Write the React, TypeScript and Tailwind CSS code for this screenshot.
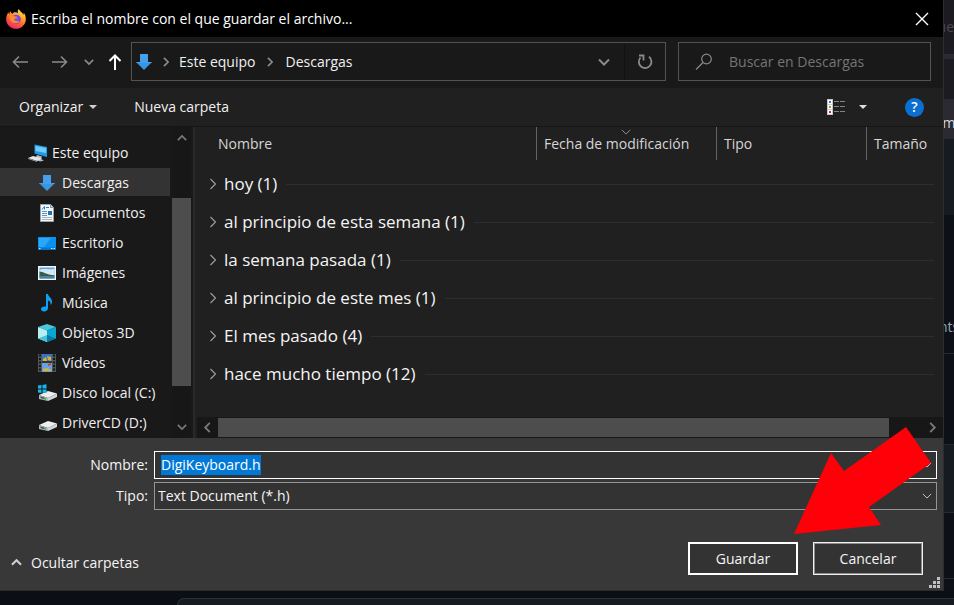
import React, { useEffect, useRef } from "react";

type IconProps = { className?: string };

function FirefoxIcon() {
  return (
    <svg viewBox="0 0 20 20" className="h-5 w-5 shrink-0" aria-hidden="true">
      <defs>
        <linearGradient id="fxBody" x1="0.8" y1="0" x2="0.25" y2="1">
          <stop offset="0" stopColor="#fff44f" />
          <stop offset="0.35" stopColor="#ffa12b" />
          <stop offset="0.65" stopColor="#ff5a36" />
          <stop offset="1" stopColor="#f0207c" />
        </linearGradient>
        <radialGradient id="fxGlobe" cx="0.5" cy="0.4" r="0.6">
          <stop offset="0" stopColor="#9059ff" />
          <stop offset="1" stopColor="#5b3fc4" />
        </radialGradient>
      </defs>
      <path
        d="M12.800 0c-1.200 1.300-1.300 2.800-.6 4.200-1-.7-2.100-1-3.200-.9C8 3.300 7.300 3.800 6.600 4.700 5.600 4.500 5 3.800 4.700 2.300 3.900 3 3.500 3.900 3.300 4.900 2.800 4.800 2.500 4.200 2.400 3.300 1 5.300.2 7.600.2 10.200c0 5.300 4.400 9.600 9.800 9.600s9.800-4.300 9.800-9.600c0-2.800-.9-5-2.300-6.600.2.800.3 1.600.1 2.300C16.500 3.300 13.600 2.500 12.800 0z"
        fill="url(#fxBody)"
      />
      <circle cx="10.200" cy="10.300" r="4.500" fill="url(#fxGlobe)" />
      <path d="M3.500 7.500c1.500-1.400 3.500-1 4.700-.2 1 .1 2.200.1 2.800.6-.3 1.100-2 1.200-2.500 1.800-.2 1 .2 2 1.500 2.400 1.200.4 2.300-.5 3.500-.2-.7 1.700-2.600 2.700-4.500 2.400C6.200 14 3.500 11.500 3.500 7.500z" fill="#ff8a2a" />
    </svg>
  );
}

function DownloadArrow({ className }: IconProps) {
  return (
    <svg viewBox="0 0 18 18" className={className} aria-hidden="true">
      <path d="M5 1h8v8h4l-8 8-8-8h4z" fill="#3a96e0" />
      <path d="M5 1h8v8h4l-1 1H2L1 9h4z" fill="#44a0ec" />
    </svg>
  );
}

function Chevron({ dir, className, weight = 1.5 }: IconProps & { dir: "up" | "down" | "left" | "right"; weight?: number }) {
  const paths = {
    up: "M1 8.500 6 3.500l5 5",
    down: "M1 3.500l5 5 5-5",
    left: "M8.500 1l-5 5 5 5",
    right: "M3.500 1l5 5-5 5",
  };
  return (
    <svg viewBox="0 0 12 12" className={className} fill="none" stroke="currentColor" strokeWidth={weight} aria-hidden="true">
      <path d={paths[dir]} />
    </svg>
  );
}

function NavArrow({ dir }: { dir: "left" | "right" | "up" }) {
  const paths = {
    left: "M16 8H1.500M7 2.500 1.500 8 7 13.500",
    right: "M0 8h14.500M9 2.500 14.500 8 9 13.500",
    up: "M8 16V1.500M2.500 7 8 1.500 13.500 7",
  };
  return (
    <svg viewBox="0 0 16 16" className="h-4 w-4" fill="none" stroke="currentColor" strokeWidth={dir === "up" ? 2 : 1.6} aria-hidden="true">
      <path d={paths[dir]} />
    </svg>
  );
}

function ComputerIcon() {
  return (
    <svg viewBox="0 0 20 18" className="h-[18px] w-5" aria-hidden="true">
      <path d="M6.500.5 19 3v10L6.500 9.500z" fill="#1e9be8" />
      <path d="M7.500 2 18 4v5L7.500 7z" fill="#6fcbf8" />
      <path d="M9 11l5 1.500-1 2.500 3 1.500-4 1-5-2z" fill="#b9bdc1" />
      <path d="M0 14l5-2 9 2.500-5 2.500z" fill="#e4e6e8" />
      <path d="M0 14l9 3v1l-9-3z" fill="#8d9296" />
    </svg>
  );
}

function DocumentIcon() {
  return (
    <svg viewBox="0 0 18 18" className="h-[18px] w-[18px]" aria-hidden="true">
      <path d="M2.500.5h10l3 3v14h-13z" fill="#f4f6f7" stroke="#9ba1a5" />
      <path d="M12.500.5v3h3" fill="#cfd4d7" stroke="#8b9195" />
      <path d="M4 5.500 6.500 2.500v3M8 3.500h3" stroke="#1683d8" fill="none" />
      <path d="M4 7.500h5M4 9.500h5M4 11.500h5" stroke="#4b9bd0" />
      <path d="M10 7h4v4h-4z" fill="#2a72a8" />
      <path d="M4 13.500h10M4 15.500h10" stroke="#a5b4be" />
    </svg>
  );
}

function DesktopIcon() {
  return (
    <svg viewBox="0 0 18 18" className="h-[18px] w-[18px]" aria-hidden="true">
      <path d="M0 3h18v12H0z" fill="#0a90ee" />
      <path d="M1 4h12L6 13H1z" fill="#2ba7f7" />
      <path d="M0 13.500h18V16H0z" fill="#0775c9" />
      <path d="M1 14h1.500v1H1zM13 14h1.500v1H13zM15.500 14H17v1h-1.500z" fill="#d6efff" />
    </svg>
  );
}

function PictureIcon() {
  return (
    <svg viewBox="0 0 18 18" className="h-[18px] w-[18px]" aria-hidden="true">
      <path d="M0 2h18v14H0z" fill="#f2f4f5" />
      <path d="M1.500 3.500h15v11h-15z" fill="#5aa7df" />
      <path d="M1.500 6c4-2 7 0 15-1v6h-15z" fill="#d3e8f3" />
      <path d="M1.500 7.500c4 0 6 3 15 4v1h-15z" fill="#315d4b" />
      <path d="M1.500 12h15v2.500h-15z" fill="#4e7e99" />
    </svg>
  );
}

function MusicIcon() {
  return (
    <svg viewBox="0 0 18 18" className="h-[18px] w-[18px]" aria-hidden="true">
      <path d="M8 0h2c.3 3 4.500 4 4 8.500-.2 1.200-.8 2-1.500 2.500.4-2.500-.6-4-2.500-4.500V14c0 2-1.700 3.500-3.800 3.500S3 16.500 3 15c0-1.700 2-3 5-2.500z" fill="#10a0f5" />
    </svg>
  );
}

function CubeIcon() {
  return (
    <svg viewBox="0 0 18 18" className="h-[18px] w-[18px]" aria-hidden="true">
      <path d="M9 0l9 3-9 3.500L0 3z" fill="#49c8dc" />
      <path d="M0 3l9 3.500V18l-9-3.500z" fill="#b8eef2" />
      <path d="M18 3 9 6.500V18l9-3.500z" fill="#0aa5d3" />
      <path d="M0 14.500 9 11v7z" fill="#45c3d8" />
      <path d="M18 14.500 9 11v7z" fill="#067aa5" />
    </svg>
  );
}

function VideoIcon() {
  return (
    <svg viewBox="0 0 18 18" className="h-[18px] w-[18px]" aria-hidden="true">
      <path d="M0 0h18v18H0z" fill="#50565a" />
      <path d="M4 0h10v18H4z" fill="#3b6fd0" />
      <path d="M4 9h10v9H4z" fill="#67a0e8" />
      <path d="M5 5l3-2 1 4-4 1zM9 2l4 1v4l-3-1z" fill="#d8b51e" />
      <path d="M4 7h10v2H4z" fill="#283c28" />
      <path d="M10 10l3-1v2l-3 1z" fill="#d83b32" />
      <path d="M5 15l4-1 4 2v1H5z" fill="#d8b51e" />
      <path d="M1 1.500h2M1 5h2M1 8.500h2M1 12h2M1 15.500h2M15 1.500h2M15 5h2M15 8.500h2M15 12h2M15 15.500h2" stroke="#15181a" strokeWidth="2" />
    </svg>
  );
}

function DriveIcon({ windows = false }: { windows?: boolean }) {
  return (
    <svg viewBox="0 0 19 18" className="h-[18px] w-[19px]" aria-hidden="true">
      <path d="M1 11l9-4 9 2.500-9 4.500z" fill="#eceeef" />
      <path d="M1 11l9 3v3l-9-2z" fill="#b5b8ba" />
      <path d="M19 9.500 10 14v3l9-4z" fill="#d3d5d6" />
      <path d="M2.500 12.500l5 1.500v1.500l-5-1.500z" fill="#484b4d" />
      <path d="M6 14h2v1.500H6z" fill="#31c34b" />
      {windows && <path d="M0 1.500 3.500 1v3.500H0zM4.500 1 8.500.3v4.200h-4zM0 5.500h3.500V9L0 8.500zM4.500 5.500h4V9l-4-.3z" fill="#16b5ea" />}
    </svg>
  );
}

const folders = [
  { name: "Descargas", icon: <DownloadArrow className="h-[18px] w-[18px]" />, active: true },
  { name: "Documentos", icon: <DocumentIcon /> },
  { name: "Escritorio", icon: <DesktopIcon /> },
  { name: "Imágenes", icon: <PictureIcon /> },
  { name: "Música", icon: <MusicIcon /> },
  { name: "Objetos 3D", icon: <CubeIcon /> },
  { name: "Vídeos", icon: <VideoIcon /> },
  { name: "Disco local (C:)", icon: <DriveIcon windows /> },
  { name: "DriverCD (D:)", icon: <DriveIcon /> },
];

const groups = [
  "hoy (1)",
  "al principio de esta semana (1)",
  "la semana pasada (1)",
  "al principio de este mes (1)",
  "El mes pasado (4)",
  "hace mucho tiempo (12)",
];

function TitleBar() {
  return (
    <header className="flex h-[37px] items-center bg-black pl-1.5 pr-3.5 text-white">
      <FirefoxIcon />
      <h1 className="ml-[5px] flex-1 whitespace-nowrap">Escriba el nombre con el que guardar el archivo...</h1>
      <button type="button" aria-label="Cerrar">
        <svg viewBox="0 0 14 14" className="h-3.5 w-3.5" stroke="currentColor" strokeWidth="1.4" aria-hidden="true">
          <path d="M1 1l12 12M13 1 1 13" />
        </svg>
      </button>
    </header>
  );
}

function NavigationBar() {
  return (
    <nav className="flex h-[51px] items-center bg-[#191919] pl-3 pr-3 pb-0.5 text-[#8a8a8a]">
      <button type="button" aria-label="Atrás"><NavArrow dir="left" /></button>
      <button type="button" aria-label="Adelante" className="ml-6"><NavArrow dir="right" /></button>
      <button type="button" aria-label="Ubicaciones recientes" className="ml-4"><Chevron dir="down" weight={2} className="h-2.5 w-2.5" /></button>
      <button type="button" aria-label="Subir" className="ml-[13px] mr-2 text-white"><NavArrow dir="up" /></button>
      <div className="flex h-[39px] flex-1 items-center border border-[#535353] pl-[3px]">
        <DownloadArrow className="h-[18px] w-[18px]" />
        <Chevron dir="right" weight={2} className="mx-2 h-2.5 w-2.5" />
        <button type="button" className="text-[#f0f0f0]">Este equipo</button>
        <Chevron dir="right" weight={2} className="mx-2.5 h-2.5 w-2.5" />
        <button type="button" className="text-[#f0f0f0]">Descargas</button>
        <button type="button" aria-label="Ubicaciones anteriores" className="ml-auto flex h-full items-center border-r border-[#131313] pr-3.5">
          <Chevron dir="down" weight={2} className="h-3 w-3" />
        </button>
        <button type="button" aria-label="Actualizar" className="px-[11px]">
          <svg viewBox="0 0 18 18" className="h-[18px] w-[18px]" fill="none" stroke="currentColor" strokeWidth="1.800" aria-hidden="true">
            <path d="M13 3.800A6.300 6.300 0 1 1 4.500 4.500" />
            <path d="M3 2.500h4.500V7.500" />
          </svg>
        </button>
      </div>
      <label className="ml-3 flex h-[39px] w-[253px] items-center border border-[#535353] pl-4">
        <svg viewBox="0 0 18 18" className="h-[18px] w-[18px] shrink-0" fill="none" stroke="currentColor" strokeWidth="1.200" aria-hidden="true">
          <circle cx="11.500" cy="6" r="4.800" />
          <path d="M8 9.500 1 16.500" />
        </svg>
        <input
          type="search"
          aria-label="Buscar en Descargas"
          placeholder="Buscar en Descargas"
          className="ml-4 min-w-0 flex-1 bg-transparent outline-none placeholder:text-[#757575]"
        />
      </label>
    </nav>
  );
}

function Toolbar() {
  return (
    <div className="flex h-[39px] items-center border-b border-[#151515] bg-[#202020] pl-[19px] pr-[19px]">
      <button type="button" className="flex items-center gap-1.5">
        Organizar
        <svg viewBox="0 0 8 4" className="h-1 w-2" fill="#cfcfcf" aria-hidden="true"><path d="M0 0h8L4 4z" /></svg>
      </button>
      <button type="button" className="ml-[37px]">Nueva carpeta</button>
      <button type="button" aria-label="Cambiar la vista" className="ml-auto flex items-center gap-[13px]">
        <svg viewBox="0 0 19 16" className="h-4 w-[19px]" aria-hidden="true">
          <path d="M0 0h6v16H0z" fill="#c8c8c8" />
          <path d="M1 1h4v4H1zM1 6h4v4H1zM1 11h4v4H1z" fill="#fff" />
          <path d="M2 2h2v2H2z" fill="#3478b8" />
          <path d="M2 7h2v2H2z" fill="#8a9a34" />
          <path d="M2 12h2v2H2z" fill="#c03024" />
          <path d="M7 2.500h5M13 2.500h5M7 7.500h5M13 7.500h5M7 12.500h5M13 12.500h5" stroke="#858585" />
        </svg>
        <svg viewBox="0 0 8 4" className="h-1 w-2" fill="#dedede" aria-hidden="true"><path d="M0 0h8L4 4z" /></svg>
      </button>
      <button type="button" aria-label="Ayuda" className="ml-[38px] flex h-[19px] w-[19px] items-center justify-center rounded-full bg-[#0a6fcf] text-sm font-semibold text-white">
        ?
      </button>
    </div>
  );
}

function Sidebar() {
  return (
    <aside className="flex w-[195px] shrink-0 border-r-2 border-[#292929] bg-[#191919]">
      <ul className="w-[170px] pt-[11px]">
        <li className="flex h-[30px] items-center gap-1 whitespace-nowrap pl-7">
          <ComputerIcon />
          Este equipo
        </li>
        {folders.map((f) => (
          <li key={f.name} className="h-[30px]">
            <button
              type="button"
              className={
                "flex h-7 w-full items-center whitespace-nowrap pl-[38px] pt-0.5 " + (f.active ? "bg-[#333333]" : "")
              }
            >
              <span className="flex w-6 shrink-0">{f.icon}</span>
              {f.name}
            </button>
          </li>
        ))}
      </ul>
      <div className="ml-0.5 flex w-[19px] flex-col items-center bg-[#171717] text-[#7a7a7a]">
        <Chevron dir="up" weight={2} className="my-1.5 h-2.5 w-2.5" />
        <div className="mt-[49px] h-[188px] w-full bg-[#4d4d4d]" />
        <Chevron dir="down" weight={2} className="mb-1.5 mt-auto h-2.5 w-2.5" />
      </div>
    </aside>
  );
}

function FilePane() {
  return (
    <section className="flex min-w-0 flex-1 flex-col bg-[#202020]">
      <div className="flex h-[33px] items-center text-[#d6d6d6]">
        <div className="flex-1 pl-[23px]">Nombre</div>
        <div className="relative flex h-full w-[180px] items-center border-l border-[#636363] pl-[7px]">
          <Chevron dir="down" weight={1} className="absolute left-[84px] top-0 h-2.5 w-2.5 text-[#a0a0a0]" />
          Fecha de modificación
        </div>
        <div className="flex h-full w-[150px] items-center border-l border-[#636363] pl-[7px]">Tipo</div>
        <div className="flex h-full w-[77px] items-center border-l border-[#636363] pl-[7px]">Tamaño</div>
      </div>
      <ul className="pt-[5px] pl-3 pr-[9px] text-[17px] text-[#f5f5f5]">
        {groups.map((g) => (
          <li key={g} className="flex h-[38px] items-center">
            <button type="button" className="flex items-center gap-[5px]">
              <Chevron dir="right" weight={1.1} className="h-3 w-3 text-[#a0a0a0]" />
              {g}
            </button>
            <span className="ml-[9px] h-px flex-1 bg-[#2d2d2d]" />
          </li>
        ))}
      </ul>
      <div className="ml-0.5 mt-auto flex h-[21px] items-center bg-[#171717] text-[#7a7a7a]">
        <Chevron dir="left" weight={2} className="mx-[5px] h-[11px] w-[11px]" />
        <div className="h-[19px] flex-1 bg-[#4d4d4d]" />
        <Chevron dir="right" weight={2} className="ml-[38px] mr-[5px] h-[11px] w-[11px]" />
      </div>
    </section>
  );
}

function PointerArrow() {
  return (
    <svg viewBox="0 0 139 108" className="pointer-events-none absolute -top-[11px] right-[11px] h-[108px] w-[139px]" aria-hidden="true">
      <path d="M113 0 138 36 76 80l12 18L1 107 38 26l13 18z" fill="#ff0009" />
    </svg>
  );
}

function SaveForm() {
  const nameRef = useRef<HTMLInputElement>(null);
  useEffect(() => {
    nameRef.current?.focus();
    nameRef.current?.select();
  }, []);
  return (
    <form className="relative bg-[#383838] pb-[15px] pt-[13px] text-[#f5f5f5]" onSubmit={(e) => e.preventDefault()}>
      <div className="grid grid-cols-[148px_1fr] items-center gap-x-1.5 gap-y-[3px] pr-1.5">
        <label htmlFor="file-name" className="text-right">Nombre:</label>
        <div className="flex h-7 items-center border border-white bg-[#333333] pl-1.5 pr-1">
          <input
            id="file-name"
            ref={nameRef}
            defaultValue="DigiKeyboard.h"
            className="h-5 min-w-0 flex-1 bg-transparent leading-5 outline-none selection:bg-[#0078d7] selection:text-white"
          />
          <Chevron dir="down" weight={1.2} className="h-2.5 w-2.5 text-[#c4c4c4]" />
        </div>
        <label htmlFor="file-type" className="text-right">Tipo:</label>
        <div className="relative">
          <select id="file-type" className="h-7 w-full appearance-none border border-[#959595] bg-[#333333] pl-[3px] outline-none">
            <option>Text Document (*.h)</option>
          </select>
          <Chevron dir="down" weight={1.2} className="pointer-events-none absolute right-[5px] top-[9px] h-2.5 w-2.5 text-[#c4c4c4]" />
        </div>
      </div>
      <div className="mt-8 flex items-center pl-[11px] pr-5">
        <button type="button" className="mt-2 flex items-center gap-[9px]">
          <Chevron dir="up" weight={2.2} className="h-[11px] w-[11px] text-[#d0d0d0]" />
          Ocultar carpetas
        </button>
        <button type="submit" className="ml-auto h-[33px] w-[110px] border-2 border-white bg-[#333333]">Guardar</button>
        <button type="button" className="ml-[15px] h-[33px] w-[110px] border border-[#f0f0f0] bg-[#333333] outline-1 -outline-offset-2 outline-[#8c8c8c]">Cancelar</button>
      </div>
      <svg viewBox="0 0 11 11" className="absolute bottom-0.5 right-[3px] h-[11px] w-[11px]" fill="#bfbfbf" aria-hidden="true">
        <path d="M8 0h3v3H8zM4 4h3v3H4zM8 4h3v3H8zM0 8h3v3H0zM4 8h3v3H4zM8 8h3v3H8z" />
      </svg>
      <PointerArrow />
    </form>
  );
}

function PageBehind() {
  return (
    <div className="flex w-[11px] shrink-0 flex-col overflow-hidden border-l border-[#2a2d31] bg-[#0d1117]" aria-hidden="true">
      <div className="flex h-[54px] items-center justify-end bg-[#1c1b22] text-[#4a4952]">ue</div>
      <div className="h-[5px] bg-[#2b2a33]" />
      <div className="h-10 bg-[#1c1b22]" />
      <div className="flex h-10 items-center justify-center bg-[#2b2a33] pt-2 text-[#d8d8dc]">m</div>
      <div className="h-[76px] bg-[#161b22]" />
      <div className="flex h-[139px] items-end justify-center border-b border-[#272b31] pb-4 text-[#9aa4ae]">nts</div>
      <div className="h-[91px] border-b border-[#272b31]" />
      <div className="h-[68px] border-b border-[#272b31] bg-[#161b22]" />
      <div className="h-[66px] border-b border-[#272b31]" />
    </div>
  );
}

export default function App() {
  return (
    <div className="flex min-h-screen flex-col overflow-hidden bg-[#0b0e14] font-['Open_Sans','Noto_Sans',sans-serif] text-[14px] leading-5 text-[#f0f0f0]">
      <div className="flex">
        <main className="min-w-0 flex-1 border-b border-[#2a2a2a]">
          <TitleBar />
          <NavigationBar />
          <Toolbar />
          <div className="flex">
            <Sidebar />
            <FilePane />
          </div>
          <SaveForm />
        </main>
        <PageBehind />
      </div>
      <div className="ml-[177px] mt-[7px] flex-1 rounded-tl-lg border-l border-t border-[#2c3138] bg-[#161b22]" />
    </div>
  );
}
